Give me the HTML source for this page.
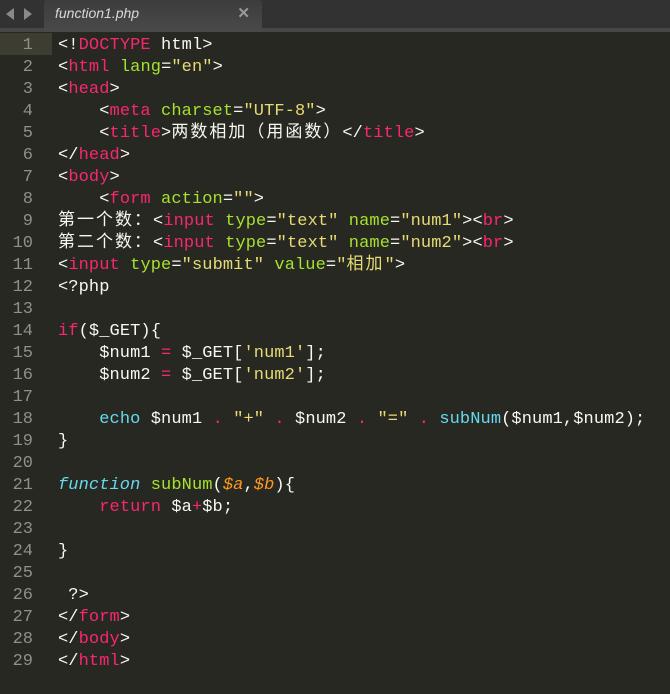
<!DOCTYPE html>
<html><head><meta charset="utf-8"><style>
body{margin:0;width:670px;height:694px;background:#272822;overflow:hidden;position:relative;font-family:"Liberation Mono","Noto Sans CJK SC",monospace;}
#bar{position:absolute;left:0;top:0;width:670px;height:28px;background:#323232;}
#strip{position:absolute;left:0;top:28px;width:670px;height:4px;background:#474747;}
#tab{position:absolute;left:44px;top:0;width:218px;height:32px;background:linear-gradient(#3c3c3c,#4a4a4a);border-radius:3px 3px 0 0;}
#tab span{position:absolute;left:11px;top:5px;color:#d8d8d8;font:italic 14px "Liberation Sans",sans-serif;}
#tab b{position:absolute;right:12px;top:4px;color:#9a9a9a;font:bold 15px "Liberation Sans",sans-serif;}
.arr{position:absolute;top:8px;width:0;height:0;border-top:6px solid transparent;border-bottom:6px solid transparent;}
#hl{position:absolute;left:0;top:33px;width:52px;height:22px;background:#3e3d32;}
#gut{position:absolute;left:0;top:35px;width:33px;text-align:right;color:#8f908a;font-size:17px;line-height:22px;white-space:pre;}
#code{position:absolute;left:58px;top:35px;color:#f8f8f2;font-size:17px;line-height:22px;white-space:pre;letter-spacing:0.1px;}
.p{color:#f92672}.g{color:#a6e22e}.y{color:#e6db74}.b{color:#66d9ef}.o{color:#fd971f;font-style:italic}.bi{color:#66d9ef;font-style:italic}
.c{letter-spacing:2px}
</style></head><body>
<div id="bar"></div>
<div class="arr" style="left:6px;border-right:8px solid #8a8a8a"></div>
<div class="arr" style="left:24px;border-left:8px solid #8a8a8a"></div>
<div id="strip"></div>
<div id="tab"><span>function1.php</span><b>✕</b></div>
<div id="hl"></div>
<div id="gut">1
2
3
4
5
6
7
8
9
10
11
12
13
14
15
16
17
18
19
20
21
22
23
24
25
26
27
28
29</div>
<div id="code">&lt;!<span class="p">DOCTYPE</span> html&gt;
&lt;<span class="p">html</span> <span class="g">lang</span>=<span class="y">"en"</span>&gt;
&lt;<span class="p">head</span>&gt;
    &lt;<span class="p">meta</span> <span class="g">charset</span>=<span class="y">"UTF-8"</span>&gt;
    &lt;<span class="p">title</span>&gt;<span class="c">两数相加（用函数）</span>&lt;/<span class="p">title</span>&gt;
&lt;/<span class="p">head</span>&gt;
&lt;<span class="p">body</span>&gt;
    &lt;<span class="p">form</span> <span class="g">action</span>=<span class="y">""</span>&gt;
<span class="c">第一个数：</span>&lt;<span class="p">input</span> <span class="g">type</span>=<span class="y">"text"</span> <span class="g">name</span>=<span class="y">"num1"</span>&gt;&lt;<span class="p">br</span>&gt;
<span class="c">第二个数：</span>&lt;<span class="p">input</span> <span class="g">type</span>=<span class="y">"text"</span> <span class="g">name</span>=<span class="y">"num2"</span>&gt;&lt;<span class="p">br</span>&gt;
&lt;<span class="p">input</span> <span class="g">type</span>=<span class="y">"submit"</span> <span class="g">value</span>=<span class="y">"<span class="c">相加</span>"</span>&gt;
&lt;?php

<span class="p">if</span>($_GET){
    $num1 <span class="p">=</span> $_GET[<span class="y">'num1'</span>];
    $num2 <span class="p">=</span> $_GET[<span class="y">'num2'</span>];

    <span class="b">echo</span> $num1 <span class="p">.</span> <span class="y">"+"</span> <span class="p">.</span> $num2 <span class="p">.</span> <span class="y">"="</span> <span class="p">.</span> <span class="b">subNum</span>($num1,$num2);
}

<span class="bi">function</span> <span class="g">subNum</span>(<span class="o">$a</span>,<span class="o">$b</span>){
    <span class="p">return</span> $a<span class="p">+</span>$b;

}

 ?&gt;
&lt;/<span class="p">form</span>&gt;
&lt;/<span class="p">body</span>&gt;
&lt;/<span class="p">html</span>&gt;</div>
</body></html>
